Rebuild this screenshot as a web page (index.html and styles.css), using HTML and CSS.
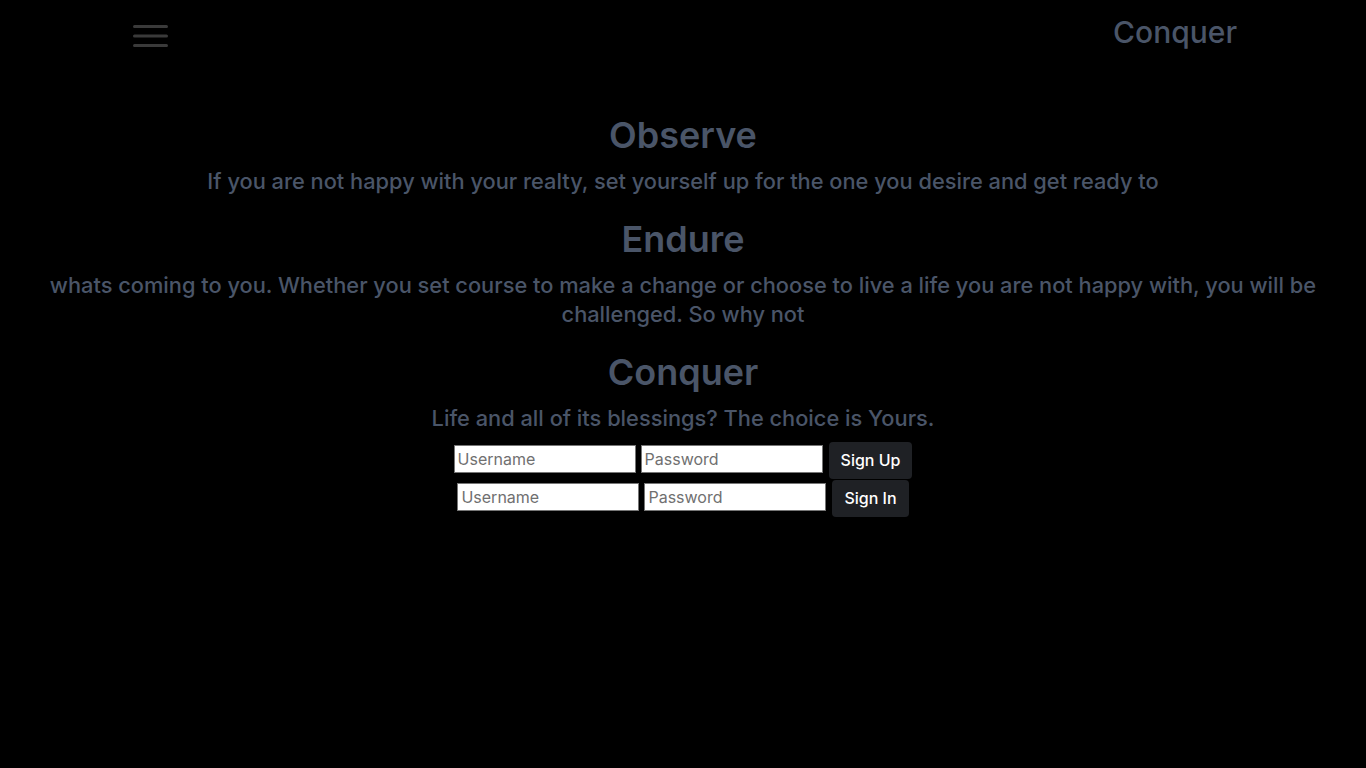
FILE: index.html
```html
<!DOCTYPE html>
<html lang="en">
<head>
<meta charset="utf-8">
<title>Conquer</title>
<link rel="stylesheet" href="styles.css">
</head>
<body>
<header class="topbar">
  <button class="menu" aria-label="Menu">
    <svg width="35" height="24" viewBox="0 0 35 24"><rect x="0" y="1" width="35" height="3" rx="1.5" fill="#3a3a3a"/><rect x="0" y="10.5" width="35" height="3" rx="1.5" fill="#3a3a3a"/><rect x="0" y="20" width="35" height="3" rx="1.5" fill="#3a3a3a"/></svg>
  </button>
  <div class="brand">Conquer</div>
</header>
<main class="content">
  <h1 class="title">Observe</h1>
  <p class="text">If you are not happy with your realty, set yourself up for the one you desire and get ready to</p>
  <h1 class="title">Endure</h1>
  <p class="text">whats coming to you. Whether you set course to make a change or choose to live a life you are not happy with, you will be challenged. So why not</p>
  <h1 class="title">Conquer</h1>
  <p class="text last">Life and all of its blessings? The choice is Yours.</p>
  <form class="row">
    <input class="field" type="text" placeholder="Username">
    <input class="field" type="password" placeholder="Password">
    <button class="btn btn-up" type="button">Sign Up</button>
  </form>
  <form class="row">
    <input class="field" type="text" placeholder="Username">
    <input class="field" type="password" placeholder="Password">
    <button class="btn btn-in" type="button">Sign In</button>
  </form>
</main>
</body>
</html>
```
FILE: styles.css
```css
* { box-sizing: border-box; }
html, body { margin: 0; padding: 0; background: #000; }
body {
  font-family: Inter, "Noto Sans", sans-serif;
  color: #4a5568;
  min-height: 768px;
}
.topbar {
  display: flex;
  justify-content: space-between;
  align-items: center;
  padding: 14px 129px 0 133px;
  height: 58px;
}
.menu {
  background: none;
  border: 0;
  padding: 0;
  display: flex;
}
.brand {
  font-size: 30px;
  font-weight: 500;
  line-height: 36px;
  margin-top: -9px;
}
.content {
  display: flex;
  flex-direction: column;
  align-items: center;
  padding: 57px 40px 0;
  text-align: center;
}
.title {
  font-size: 36px;
  line-height: 40px;
  font-weight: 600;
  margin: 0 0 12px;
}
.text {
  font-size: 21.8px;
  line-height: 29px;
  font-weight: 500;
  margin: 0 0 23px;
}
.text.last { margin-bottom: 8px; }
.row {
  display: flex;
  align-items: center;
  gap: 5px;
  margin: 0;
  height: 38px;
}
.field {
  width: 182px;
  height: 28px;
  margin-bottom: 3px;
  border: 1px solid #767676;
  background: #fff;
  font-family: Inter, "Noto Sans", sans-serif;
  font-size: 16px;
  padding: 0 3px;
  color: #000;
}
.field::placeholder { color: #707070; }
.btn {
  margin-left: 1px;
  height: 37px;
  padding: 0 12px;
  border: 0;
  border-radius: 4px;
  background: #1f2125;
  color: #fff;
  font-family: Inter, "Noto Sans", sans-serif;
  font-size: 16px;
  font-weight: 500;
}
```
